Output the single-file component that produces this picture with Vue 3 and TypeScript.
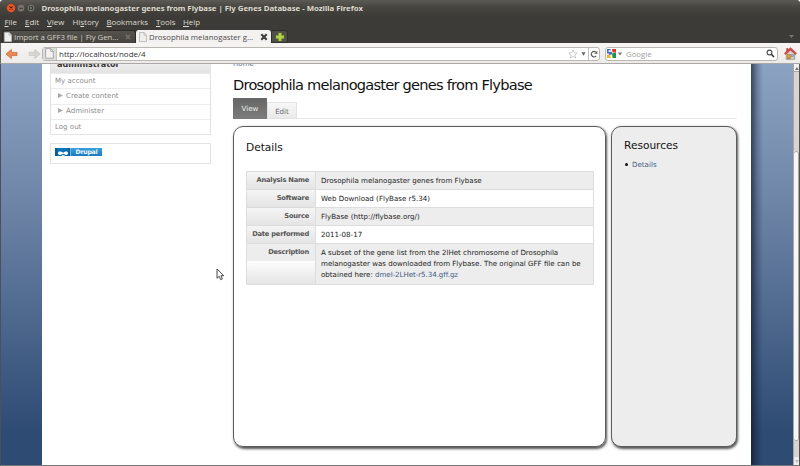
<script setup lang="ts">
interface DetailRow {
  label: string
  value: string
  link?: string
}

const menus: string[] = ['File', 'Edit', 'View', 'History', 'Bookmarks', 'Tools', 'Help']

const rows: DetailRow[] = [
  { label: 'Analysis Name', value: 'Drosophila melanogaster genes from Flybase' },
  { label: 'Software', value: 'Web Download (FlyBase r5.34)' },
  { label: 'Source', value: 'FlyBase (http://flybase.org/)' },
  { label: 'Date performed', value: '2011-08-17' },
  {
    label: 'Description',
    value:
      'A subset of the gene list from the 2lHet chromosome of Drosophila\nmelanogaster was downloaded from Flybase. The original GFF file can be\nobtained here: ',
    link: 'dmel-2LHet-r5.34.gff.gz',
  },
]
</script>

<template>
  <div class="window">
    <header class="titlebar">
      <svg class="controls" width="32" height="10" viewBox="0 0 32 10">
        <circle cx="5" cy="5" r="4.3" fill="#e9592b" stroke="#8d3517" stroke-width=".5" />
        <path d="M3.4 3.4l3.2 3.2M6.6 3.4L3.4 6.6" stroke="#55200f" stroke-width="1.1" />
        <circle cx="15" cy="5" r="3.9" fill="#77756d" stroke="#302f2b" stroke-width=".5" />
        <path d="M13 5.2h4" stroke="#3b3a36" stroke-width="1.1" />
        <circle cx="25" cy="5" r="3.9" fill="#77756d" stroke="#302f2b" stroke-width=".5" />
        <rect x="23.4" y="3.6" width="3.2" height="2.8" fill="none" stroke="#3b3a36" stroke-width=".9" />
      </svg>
      <span class="title">Drosophila melanogaster genes from Flybase | Fly Genes Database - Mozilla Firefox</span>
    </header>

    <nav class="menubar">
      <span v-for="m in menus" :key="m" class="menu" :class="m.toLowerCase()"
        ><template v-if="m === 'History'">Hi<u>s</u>tory</template
        ><template v-else><u>{{ m[0] }}</u>{{ m.slice(1) }}</template></span
      >
    </nav>

    <div class="tabbar">
      <div class="tab">
        <svg class="doc" width="8" height="10" viewBox="0 0 8 10">
          <path d="M.5.5h4.7l2.3 2.6v6.4h-7z" fill="#eee" stroke="#bbb" stroke-width=".7" />
          <path d="M5 .5v2.8h2.5" fill="none" stroke="#aaa" stroke-width=".6" />
        </svg>
        <span class="tab-text dim">Import a GFF3 file | Fly Gen…</span>
        <svg class="close" width="6" height="6" viewBox="0 0 6 6"><path d="M1 1l4 4M5 1L1 5" stroke="#77746b" stroke-width="1.3" /></svg>
      </div>
      <div class="tab active">
        <svg class="doc" width="8" height="10" viewBox="0 0 8 10">
          <path d="M.5.5h4.7l2.3 2.6v6.4h-7z" fill="#eee" stroke="#aaa" stroke-width=".7" />
          <path d="M5 .5v2.8h2.5" fill="none" stroke="#aaa" stroke-width=".6" />
        </svg>
        <span class="tab-text">Drosophila melanogaster g…</span>
        <svg class="close" width="8" height="8" viewBox="0 0 8 8"><path d="M1.3 1.3l5.4 5.4M6.7 1.3L1.3 6.7" stroke="#3e3d39" stroke-width="2.1" /></svg>
      </div>
      <div class="newtab">
        <svg width="10" height="10" viewBox="0 0 10 10"><path d="M3.6 1h2.8v2.6H9v2.8H6.4V9H3.6V6.4H1V3.6h2.6z" fill="#b4d84a" stroke="#7da02c" stroke-width=".5" /></svg>
      </div>
      <svg class="alltabs" width="5" height="3" viewBox="0 0 5 3"><path d="M0 0h5L2.5 3z" fill="#77746b" /></svg>
    </div>

    <div class="toolbar">
      <svg class="nav-arrows" width="36" height="12" viewBox="0 0 36 12">
        <path d="M1 6l5.4-4.6v3H12v3.2H6.4v3z" fill="#ee8a4d" stroke="#c3623a" stroke-width=".7" />
        <path d="M35.2 6l-5.4-4.6v3h-5.6v3.2h5.6v3z" fill="#d8d6d3" stroke="#c6c3bf" stroke-width=".7" />
      </svg>
      <div class="url">
        <span class="identity">
          <svg width="9" height="11" viewBox="0 0 9 11">
            <path d="M.6.6h5.2l2.5 2.7v6.9H.6z" fill="#f2f2f2" stroke="#999" stroke-width=".8" />
            <path d="M5.7.8v2.7h2.5" fill="none" stroke="#999" stroke-width=".7" />
          </svg>
        </span>
        <span class="address">http://localhost/node/4</span>
        <svg class="star" width="10" height="10" viewBox="0 0 10 10"><path d="M5 .9l1.2 2.8 3 .3-2.3 2 .7 3L5 7.4 2.4 9l.7-3L.8 4l3-.3z" fill="#fff" stroke="#b7b7b7" stroke-width=".7" /></svg>
        <svg class="drop" width="5" height="4" viewBox="0 0 5 4"><path d="M.4.3h4.200L2.500 3.700z" fill="#666" /></svg>
        <span class="reload">
          <svg width="8" height="8" viewBox="0 0 8 8"><path d="M6.2 5.8A2.7 2.7 0 1 1 5.7 2" fill="none" stroke="#555" stroke-width="1.1" /><path d="M4.3 3.7h3V.8z" fill="#555" /></svg>
        </span>
      </div>
      <div class="search">
        <svg width="9" height="9" viewBox="0 0 9 9">
          <rect width="9" height="9" rx="1" fill="#fff" />
          <path d="M0 0h3.500v3L2 4.500H0z" fill="#3c6bc5" />
          <path d="M5 0h4v3.500H5.500z" fill="#e7342b" />
          <path d="M5 4.500l4-1V9H5.600z" fill="#149848" />
          <path d="M0 5.800l3-.6L4 9H0z" fill="#f4b51e" />
          <path d="M1.500 3.600l3.200-.9.6 2.600-2.800.7z" fill="#3c6bc5" />
          <path d="M1.600 1.200h1.900V3H1.600zM3.600 6.500h1.400v1.400H3.600z" fill="#fff" />
        </svg>
        <svg class="drop" width="4" height="4" viewBox="0 0 4 4"><path d="M0 .4h4L2 3.600z" fill="#777" /></svg>
        <span class="placeholder">Google</span>
        <svg class="lens" width="9" height="9" viewBox="0 0 9 9"><circle cx="3.5" cy="3.5" r="2.4" fill="none" stroke="#4a4a4a" stroke-width="1.1" /><path d="M5.3 5.3l2.7 2.7" stroke="#333" stroke-width="1.6" /></svg>
      </div>
      <svg class="home" width="13" height="13" viewBox="0 0 13 13">
        <path d="M2.3 6.5L6.5 3l4.2 3.5v5.8H2.3z" fill="#d6d3cd" stroke="#777" stroke-width=".6" />
        <path d="M2.3 1.3h2v3h-2z" fill="#b83a37" />
        <path d="M.8 7.1L6.5 1.9l5.7 5.2" fill="none" stroke="#cf4b4b" stroke-width="2.3" />
        <rect x="3.6" y="7.6" width="2.8" height="4.2" fill="#e59a23" stroke="#8c5b15" stroke-width=".4" />
        <rect x="7.6" y="7.6" width="2" height="2.2" fill="#9bb2cc" stroke="#777" stroke-width=".4" />
      </svg>
    </div>

    <div class="viewport">
      <div class="page">
        <aside class="sidebar">
          <section class="block">
            <h3>administrator</h3>
            <ul>
              <li>My account</li>
              <li class="sub"><svg width="5" height="5" viewBox="0 0 5 5"><path d="M0 0l5 2.5L0 5z" fill="#aaa" /></svg>Create content</li>
              <li class="sub"><svg width="5" height="5" viewBox="0 0 5 5"><path d="M0 0l5 2.5L0 5z" fill="#aaa" /></svg>Administer</li>
              <li>Log out</li>
            </ul>
          </section>
          <section class="powered">
            <div class="drupal">
              <svg width="16" height="8" viewBox="0 0 16 8">
                <rect width="16" height="8" fill="#0b73b5" />
                <path d="M0 0h2.6Q1 3.2 3 8H0zM13 0h3v8h-3Q15.2 4 13 0z" fill="#075b91" />
                <path d="M3 5.2c0-2.4 3.1-1.8 5.3-.4 2-1.8 4.7-2 4.7.3 0 2.5-2.8 2.1-4.6.7C6.3 7.3 3 7.5 3 5.2z" fill="#fff" />
                <path d="M7 7.5h2.5" stroke="#fff" stroke-width=".8" />
                <path d="M15.6 0v8" stroke="#d5e9f6" stroke-width=".7" />
              </svg>
              <span>Drupal</span>
            </div>
          </section>
        </aside>

        <main class="main">
          <div class="crumb">Home</div>
          <h1>Drosophila melanogaster genes from Flybase</h1>
          <div class="tabs">
            <span class="ptab current">View</span>
            <span class="ptab">Edit</span>
          </div>
          <div class="panels">
            <section class="panel details">
              <h2>Details</h2>
              <div class="table">
                <div v-for="r in rows" :key="r.label" class="row" :class="{ tall: r.link }">
                  <div class="th">{{ r.label }}</div>
                  <div class="td"><span>{{ r.value }}<a v-if="r.link">{{ r.link }}</a></span></div>
                </div>
              </div>
            </section>
            <section class="panel resources">
              <h2>Resources</h2>
              <div class="item"><i></i><a>Details</a></div>
            </section>
          </div>
        </main>
      </div>
      <div class="sky"></div>
      <div class="scrollbar">
        <div class="arrow up"><svg width="4" height="3" viewBox="0 0 4 3"><path d="M0 3h4L2 0z" fill="#777" /></svg></div>
        <div class="thumb"></div>
        <div class="trough"></div>
        <div class="arrow"><svg width="4" height="3" viewBox="0 0 4 3"><path d="M0 0h4L2 3z" fill="#bbb" /></svg></div>
      </div>
    </div>
    <svg class="cursor" width="9" height="13" viewBox="0 0 9 13"><path d="M1 1v9.3l2.2-2 1.5 3.4 1.7-.8-1.5-3.2h2.9z" fill="#fff" stroke="#333" stroke-width=".9" /></svg>
  </div>
</template>

<style>
body {
  background: #fff;
}
</style>

<style scoped>
* {
  box-sizing: border-box;
}
svg {
  display: block;
  flex: none;
}
.window {
  width: 800px;
  height: 466px;
  display: flex;
  flex-direction: column;
  overflow: hidden;
  position: relative;
  border-radius: 4px 4px 0 0;
  background: #3c3b37;
  font-family: 'Open Sans', 'Noto Sans', sans-serif;
  white-space: nowrap;
}
.titlebar {
  height: 16px;
  display: flex;
  align-items: center;
  padding-left: 5.5px;
  background: linear-gradient(#5c5a54, #46453f 45%, #3d3c38);
}
.title {
  margin-left: 4px;
  font: 700 7.8px/16px 'Noto Sans', sans-serif;
  color: #dfdbd2;
  letter-spacing: -0.015px;
}
.menubar {
  height: 14px;
  display: flex;
  padding-left: 4.5px;
  font-size: 7.9px;
  line-height: 13.5px;
  color: #dfdbd2;
}
.menu.file { width: 20.5px; }
.menu.edit { width: 22px; }
.menu.view { width: 25.5px; }
.menu.history { width: 34px; }
.menu.bookmarks { width: 49.5px; }
.menu.tools { width: 27px; }
.menu u {
  text-underline-offset: 1px;
  text-decoration-thickness: 0.7px;
}
.tabbar {
  height: 13px;
  display: flex;
  align-items: stretch;
}
.tab {
  width: 134px;
  margin-left: 2px;
  padding-left: 1px;
  display: flex;
  align-items: center;
  border-radius: 3px 3px 0 0;
  background: linear-gradient(#54524c, #454440);
  border: 1px solid #2c2b28;
  border-bottom: 0;
}
.tab.active {
  width: 135px;
  margin-left: 0;
  padding-left: 2px;
  background: #f3f2f1;
  border-color: #f3f2f1;
}
.tab-text {
  font-size: 7.8px;
  line-height: 12px;
  margin-left: 2px;
  width: 111px;
  color: #4c4b48;
}
.tab-text.dim {
  color: #d5d1c8;
  letter-spacing: -0.04px;
}
.newtab {
  width: 17px;
  display: flex;
  justify-content: center;
  align-items: center;
  background: #4f4e49;
  border-radius: 2px 3px 0 0;
  border: 1px solid #2f2e2b;
}
.alltabs {
  margin: 5px 6px 0 auto;
}
.toolbar {
  height: 21px;
  display: flex;
  align-items: center;
  padding: 1px 3px 0 4px;
  background: linear-gradient(#f6f5f4, #ecebe9);
  border-bottom: 1px solid #aaa9a7;
  border-left: 1px solid #666;
}
.url {
  width: 558px;
  height: 14px;
  margin-left: 1px;
  display: flex;
  align-items: center;
  background: #fff;
  border: 1px solid #bab7b3;
  border-radius: 3px;
}
.identity {
  width: 14px;
  height: 12px;
  display: flex;
  align-items: center;
  justify-content: center;
  background: #dedcda;
  border-right: 1px solid #c6c4c1;
}
.address {
  width: 512px;
  padding-left: 2px;
  font-size: 8px;
  line-height: 12px;
  color: #333;
}
.star {
  margin-left: -1px;
}
.url .drop {
  margin-left: 3px;
}
.reload {
  margin-left: 2px;
  padding-left: 1px;
  height: 12px;
  display: flex;
  align-items: center;
  border-left: 1px solid #c6c4c1;
}
.search {
  width: 173px;
  height: 14px;
  margin-left: 5px;
  padding: 0 2px 0 1px;
  display: flex;
  align-items: center;
  background: #fff;
  border: 1px solid #bab7b3;
  border-radius: 3px;
}
.search .drop {
  margin-left: 2px;
}
.placeholder {
  margin-left: 4px;
  font-size: 7.8px;
  line-height: 12px;
  color: #a0a0a0;
}
.lens {
  margin-left: auto;
}
.home {
  margin-left: 6px;
}
.viewport {
  height: 402px;
  display: flex;
  overflow: hidden;
  border-left: 1px solid #48525f;
  border-right: 1px solid #55534f;
  border-bottom: 1px solid #777;
  padding-left: 41px;
  background: linear-gradient(#8ba2c2, #7389ab 30%, #2e4b74 92%);
  font-family: 'DejaVu Sans', sans-serif;
}
.page {
  width: 709px;
  height: 401px;
  background: #fff;
  display: flex;
  align-items: flex-start;
}
.sky {
  width: 42px;
  background: linear-gradient(90deg, rgba(10, 20, 35, 0.65), rgba(10, 20, 35, 0.25) 6px, rgba(10, 20, 35, 0) 12px);
}
.scrollbar {
  width: 6px;
  background: #efedeb;
  display: flex;
  flex-direction: column;
  border-left: 1px solid #aaa7a3;
}
.arrow {
  height: 8px;
  display: flex;
  align-items: center;
  justify-content: center;
}
.arrow.up {
  height: 87px;
  align-items: flex-start;
  padding-top: 3px;
  background: linear-gradient(#f2f1f0 7px, #aaa7a3 7px, #aaa7a3 8px, #d8d4d0 8px);
}
.thumb {
  height: 290px;
  background: #f7f6f5;
  border: 1px solid #aaa7a3;
  border-left: 0;
  border-radius: 3px;
}
.trough {
  height: 16px;
  background: #d8d4d0;
}
.sidebar {
  width: 161px;
  margin-left: 8px;
}
.block {
  border: 1px solid #e3e3e3;
  border-top: 0;
  height: 71px;
}
h3 {
  margin: 0;
  height: 9px;
  padding-left: 6px;
  font-size: 8.1px;
  line-height: 1px;
  color: #333;
  background: linear-gradient(#eee, #e2e2e2);
}
ul {
  margin: 0;
  padding: 0;
  list-style: none;
}
li {
  height: 15.3px;
  padding: 0 0 2px 4px;
  display: flex;
  align-items: center;
  font-size: 7.05px;
  color: #8d8d8d;
  border-top: 1px solid #ececec;
}
li.sub {
  padding-left: 7px;
}
li svg {
  margin-right: 3px;
}
.powered {
  height: 21px;
  margin-top: 8px;
  padding: 4px;
  border: 1px solid #e3e3e3;
}
.drupal {
  width: 47px;
  height: 8px;
  display: flex;
  background: linear-gradient(#3a9edd, #1a7cc0);
}
.drupal span {
  width: 31px;
  font: 700 6.2px/8px 'DejaVu Sans', sans-serif;
  text-align: center;
  color: #eef6fc;
  letter-spacing: -0.25px;
}
.main {
  width: 504px;
  margin-left: 22px;
}
.crumb {
  height: 11px;
  font-size: 7.1px;
  line-height: 0;
  color: #58708e;
}
h1 {
  margin: 0;
  height: 23px;
  font-weight: 400;
  font-size: 14.6px;
  line-height: 20px;
  letter-spacing: -0.77px;
  color: #111;
}
.tabs {
  height: 21px;
  display: flex;
  align-items: flex-end;
  border-bottom: 1px solid #e9e9e9;
}
.ptab {
  width: 30px;
  height: 17px;
  margin-bottom: -1px;
  text-align: center;
  font-size: 7.1px;
  line-height: 17px;
  color: #666;
  background: linear-gradient(#f7f7f7, #eaeaea);
  border: 1px solid #e2e2e2;
}
.ptab.current {
  width: 34px;
  height: 21px;
  line-height: 21px;
  color: #eee;
  background: linear-gradient(#666, #7c7c7c);
  border: 0;
}
.panels {
  display: flex;
  gap: 5px;
  margin-top: 7px;
}
.panel {
  height: 321px;
  border: 1px solid #5c5c5c;
  border-radius: 10px;
  box-shadow: 1px 1.5px 2.5px #555;
}
.details {
  flex: none;
  width: 373px;
  padding: 0 11px 0 12px;
}
.resources {
  flex: none;
  width: 126px;
  padding-left: 12px;
  background: #ededed;
}
h2 {
  margin: 0;
  font-weight: 400;
  font-size: 10.6px;
  color: #111;
}
.details h2 {
  height: 44px;
  line-height: 41px;
}
.resources h2 {
  height: 30px;
  line-height: 36px;
}
.item {
  display: flex;
  align-items: center;
  height: 14px;
  font-size: 7.1px;
}
.item i {
  width: 3px;
  height: 3px;
  margin: 0 4px 0 1px;
  border-radius: 50%;
  background: #111;
}
a {
  color: #3f5c85;
}
.table {
  width: 348px;
  border-top: 1px solid #ddd;
  border-right: 1px solid #ddd;
}
.row {
  height: 17.9px;
  display: flex;
  font-size: 7.08px;
  line-height: 17px;
  border-bottom: 1px solid #ddd;
  background: #fff;
}
.row:nth-child(odd) {
  background: #ededed;
}
.th {
  width: 70px;
  padding-right: 6px;
  text-align: right;
  font-weight: 700;
  font-size: 6.7px;
  letter-spacing: -0.22px;
  color: #555;
  border-left: 1px solid #ddd;
  border-right: 1px solid #ddd;
  background: linear-gradient(#f5f5f5, #e4e4e4);
}
.td {
  padding-left: 5px;
  white-space: pre;
  color: #222;
}
.row.tall {
  height: 41px;
}
.tall .th {
  background: linear-gradient(#ededed 17px, #fdfdfd 17px, #e4e4e4);
}
.tall .td {
  padding-top: 3px;
  line-height: 11.4px;
}
.tall a {
  letter-spacing: -0.05px;
}
.cursor {
  position: absolute;
  left: 216px;
  top: 268px;
}
</style>
